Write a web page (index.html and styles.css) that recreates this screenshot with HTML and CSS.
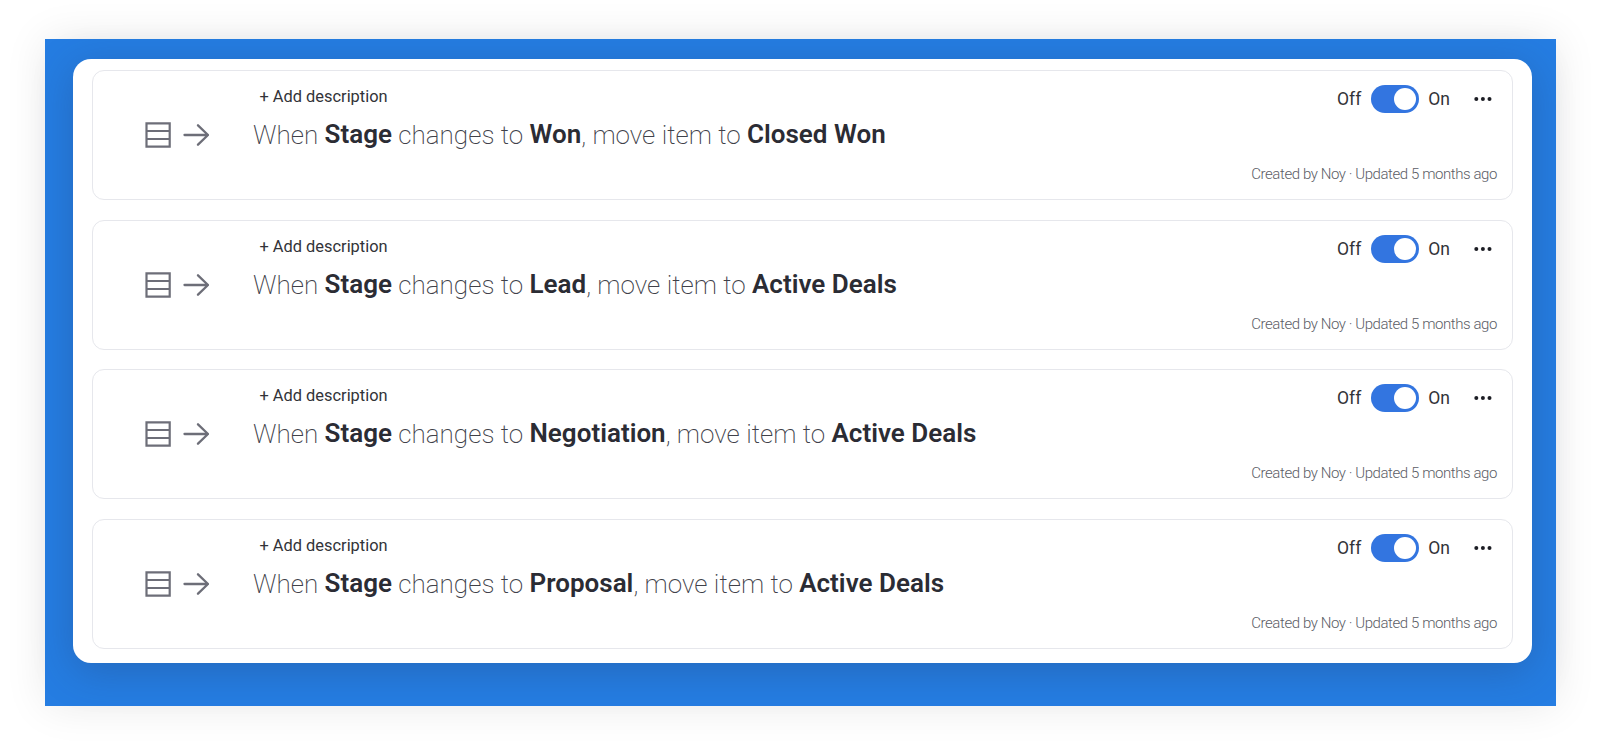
FILE: index.html
```html
<!DOCTYPE html>
<html lang="en">
<head>
    <meta charset="UTF-8">
    <meta name="viewport" content="width=device-width, initial-scale=1.0">
    <title>Automations</title>
    <link rel="stylesheet" href="styles.css">
</head>
<body>
    <svg class="sprite" aria-hidden="true">
        <symbol id="icon-group" viewBox="0 0 26 26">
            <path d="M1.5 1.3H24.7V24.7H1.5ZM1.5 9H24.7M1.5 17H24.7" fill="none" stroke="currentColor" stroke-width="2.2"/>
        </symbol>
        <symbol id="icon-arrow" viewBox="0 0 26 26">
            <path d="M1.5 13H25M15 3.3L25 13L15 22.7" fill="none" stroke="currentColor" stroke-width="2.3" stroke-linecap="round" stroke-linejoin="round"/>
        </symbol>
        <symbol id="icon-more" viewBox="0 0 18 6">
            <g fill="currentColor">
                <circle cx="2.3" cy="3" r="2"/>
                <circle cx="8.9" cy="3" r="2"/>
                <circle cx="15.5" cy="3" r="2"/>
            </g>
        </symbol>
    </svg>

    <div class="frame">
        <div class="panel" id="automations"></div>
    </div>

    <script>
        const automations = [
            { stage: 'Won', group: 'Closed Won' },
            { stage: 'Lead', group: 'Active Deals' },
            { stage: 'Negotiation', group: 'Active Deals' },
            { stage: 'Proposal', group: 'Active Deals' }
        ];

        document.getElementById('automations').innerHTML = automations.map(item => `
            <div class="card">
                <div class="icons">
                    <svg><use href="#icon-group"/></svg>
                    <svg><use href="#icon-arrow"/></svg>
                </div>
                <div class="content">
                    <div class="description">+ Add description</div>
                    <div class="sentence">When <b>Stage</b> changes to <b>${item.stage}</b>, move item to <b>${item.group}</b></div>
                </div>
                <div class="side">
                    <div class="controls">
                        <span>Off</span>
                        <span class="toggle"><span class="knob"></span></span>
                        <span>On</span>
                        <svg class="more"><use href="#icon-more"/></svg>
                    </div>
                    <div class="meta">Created by Noy · Updated 5 months ago</div>
                </div>
            </div>
        `).join('');
    </script>
</body>
</html>
```
FILE: styles.css
```css
* {
    box-sizing: border-box;
}

body {
    margin: 0;
    padding: 39px 44px 39px 45px;
    background-color: #fff;
    color: #323338;
    font-family: Roboto, sans-serif;
    height: 745px;
    overflow: hidden;
}

.sprite {
    display: none;
}

.frame {
    height: 667px;
    padding: 20px 24px 43px 28px;
    background-color: #257de2;
    box-shadow: 0 0 40px rgba(0, 0, 0, 0.09);
}

.panel {
    height: 603.5px;
    padding: 11px 19px 0;
    background-color: #fff;
    border-radius: 18px;
    box-shadow: 0 8px 40px rgba(35, 60, 100, 0.3);
    display: flex;
    flex-direction: column;
    gap: 19.5px;
}

.card {
    height: 130px;
    flex: none;
    border: 1px solid #e6e7ec;
    border-radius: 12px;
    display: flex;
}

.icons {
    width: 160px;
    padding: 51px 0 0 52px;
    display: flex;
    gap: 12px;
    color: #6d6e78;
}

.icons svg {
    width: 26px;
    height: 26px;
}

.content {
    flex: 1;
    white-space: nowrap;
}

.description {
    padding: 16px 0 0 6.5px;
    font-size: 16.4px;
    line-height: 20px;
}

.sentence {
    margin-top: 11px;
    font-size: 26px;
    line-height: 34px;
    font-weight: 200;
    letter-spacing: 0.01px;
    color: #404149;
}

.sentence b {
    position: relative;
    top: -1px;
    font-weight: 600;
    color: #2b2c34;
}

.side {
    padding: 14px 15px 0 0;
    display: flex;
    flex-direction: column;
    align-items: flex-end;
}

.controls {
    display: flex;
    align-items: center;
    height: 28px;
    margin-right: 5px;
    gap: 9px;
    font-size: 17.5px;
}

.toggle {
    width: 48px;
    height: 28px;
    margin-left: 0.5px;
    margin-right: 0.5px;
    padding: 3px;
    border-radius: 14px;
    background-color: #3375e0;
    display: flex;
    justify-content: flex-end;
}

.knob {
    width: 22px;
    height: 22px;
    border-radius: 50%;
    background-color: #fff;
}

.more {
    width: 18px;
    height: 6px;
    margin-left: 15px;
    color: #1c1d24;
}

.meta {
    margin-top: 51px;
    font-size: 15px;
    line-height: 20px;
    font-weight: 300;
    letter-spacing: -0.42px;
    color: #5c5d66;
}
```
